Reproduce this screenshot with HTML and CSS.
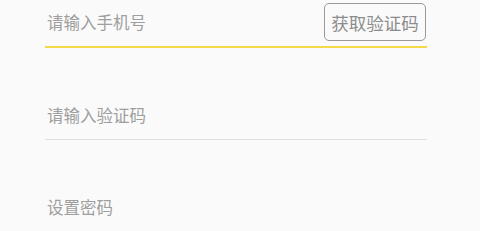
FILE: index.html
```html
<!DOCTYPE html>
<html lang="zh-CN">
<head>
  <meta charset="UTF-8">
  <meta name="viewport" content="width=device-width, initial-scale=1.0">
  <title>注册</title>
  <link rel="stylesheet" href="styles.css">
</head>
<body>
  <form class="form-reg">
    <div class="box-tf on">
      <input type="tel" class="tf-g" placeholder="请输入手机号">
      <button type="button" class="btn-code">获取验证码</button>
    </div>
    <div class="box-tf">
      <input type="text" class="tf-g" placeholder="请输入验证码">
    </div>
    <div class="box-tf">
      <input type="password" class="tf-g" placeholder="设置密码">
    </div>
  </form>
</body>
</html>
```

FILE: styles.css
```css
* {
  padding: 0;
  margin: 0;
  box-sizing: border-box;
}
body {
  background-color: #FAFAFA;
  font-family: "Noto Sans CJK SC", "Noto Sans", sans-serif;
}
.form-reg {
  width: 382px;
  margin-left: 45px;
}
.box-tf {
  display: flex;
  align-items: center;
  height: 47px;
  margin-bottom: 45px;
  border-bottom: 1px solid #E0E0E0;
}
.box-tf.on {
  height: 48px;
  border-bottom: 2px solid #F5D94A;    /* 선택된 칸 노란 밑줄 */
}
.tf-g {
  flex: 1;
  min-width: 0;
  height: 100%;
  padding: 0 0 2px 2px;
  border: 0;
  outline: 0;
  background: transparent;
  font-family: inherit;
  font-size: 16.5px;
  color: #333;
}
.tf-g::placeholder {
  color: #9E9E9E;
}
.btn-code {
  width: 102px;
  height: 38px;
  margin-right: 1px;
  margin-bottom: 2px;
  border: 1.5px solid #9A9A9A;
  border-radius: 5px;
  background: transparent;
  font-family: inherit;
  font-size: 17.5px;
  color: #8C8C8C;
  cursor: pointer;
}
```
